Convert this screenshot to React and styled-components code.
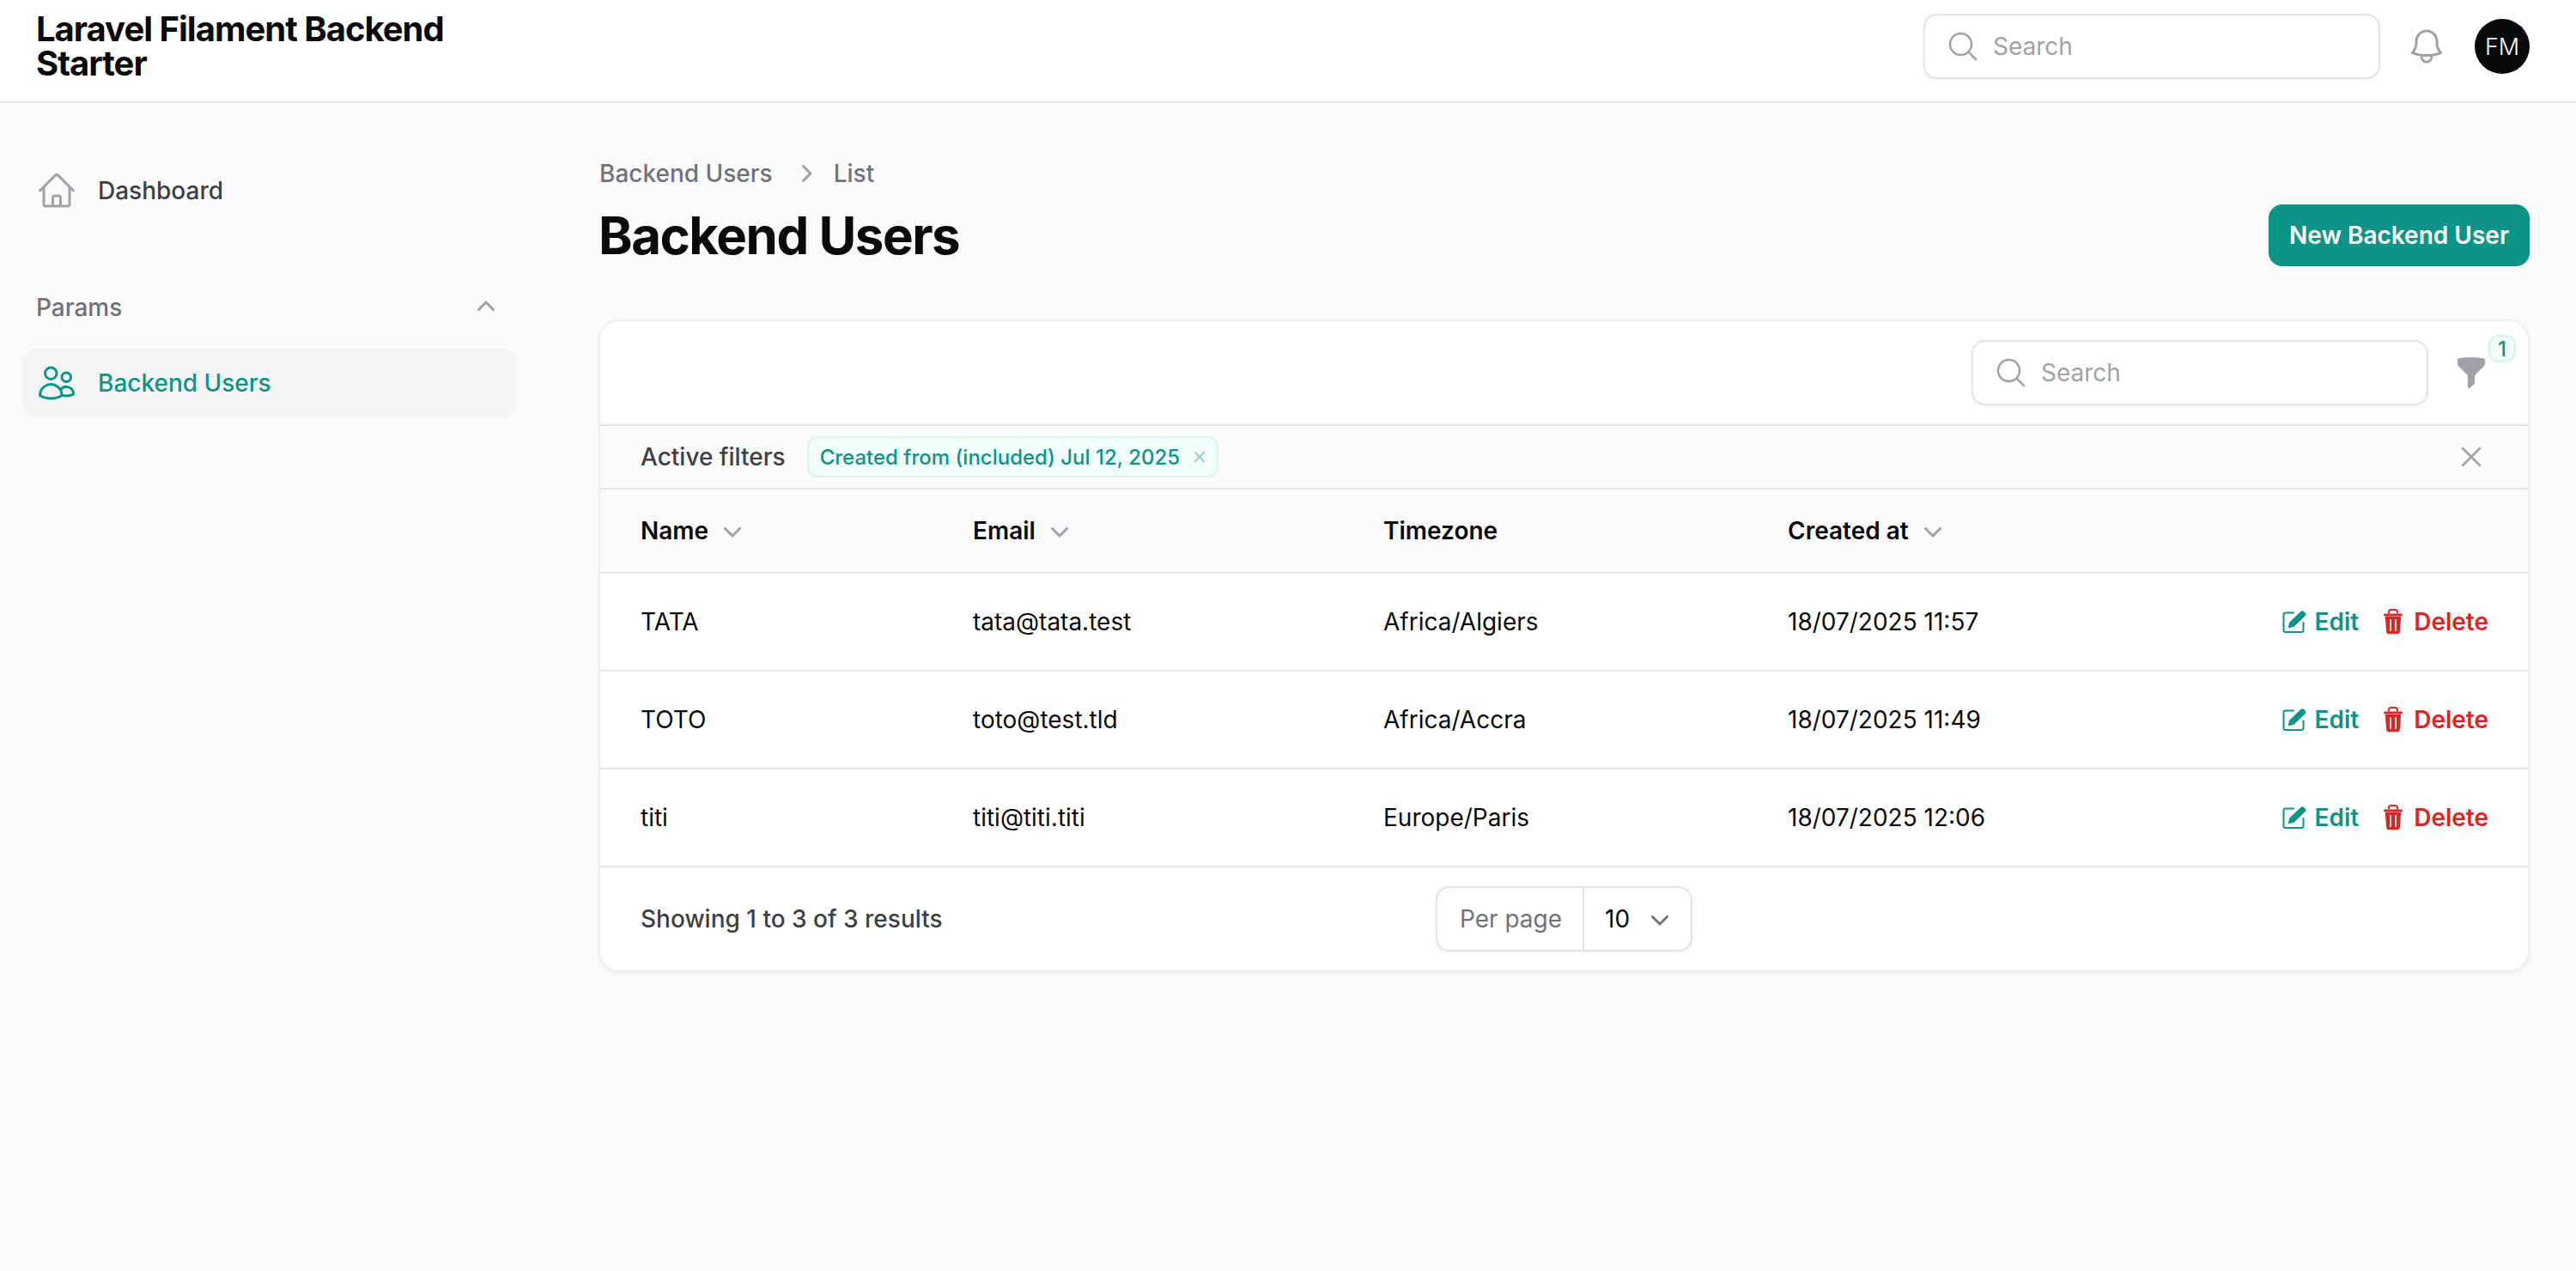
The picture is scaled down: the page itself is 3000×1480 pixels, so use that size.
import React from "react";
import styled, { createGlobalStyle } from "styled-components";
import {
  HiOutlineHome,
  HiOutlineUsers,
  HiOutlineMagnifyingGlass,
  HiOutlineBell,
  HiMiniChevronUp,
  HiMiniChevronDown,
  HiMiniChevronRight,
  HiOutlineXMark,
  HiMiniFunnel,
  HiMiniXMark,
} from "react-icons/hi2";

const Global = createGlobalStyle`
  html, body { margin: 0; padding: 0; background: #fafafa; }
  body { font-family: Inter, "Liberation Sans", sans-serif; color: #0a0a0a; }
  * { box-sizing: border-box; }
`;

const Page = styled.div`
  min-height: 1480px;
  background: #fafafa;
  display: flex;
  flex-direction: column;
`;

const TopBar = styled.header`
  height: 120px;
  background: #fff;
  border-bottom: 2px solid #e6e6e7;
  display: flex;
  align-items: center;
  gap: 32px;
  padding: 0 54px 10px 42px;
`;

const Brand = styled.div`
  font-size: 40px;
  line-height: 40px;
  font-weight: 700;
  letter-spacing: -1px;
  width: 520px;
  color: #0a0a0a;
  margin-right: auto;
`;

const SearchBox = styled.label`
  width: 532px;
  height: 76px;
  margin-right: -2px;
  background: #fff;
  border: 2px solid #e4e4e7;
  border-radius: 16px;
  box-shadow: 0 2px 4px rgba(0, 0, 0, 0.05);
  display: flex;
  align-items: center;
  gap: 15px;
  padding-left: 24px;
  color: #a1a1aa;
  svg { font-size: 40px; flex: none; }
`;

const SearchInput = styled.input`
  border: 0;
  outline: 0;
  background: transparent;
  flex: 1;
  min-width: 0;
  font: 400 28px/40px Inter, sans-serif;
  color: #0a0a0a;
  padding: 0;
  &::placeholder { color: #a1a1aa; opacity: 1; }
`;

const BellWrap = styled.span`
  display: flex;
  color: #a1a1aa;
  font-size: 48px;
`;

const Avatar = styled.span`
  width: 64px;
  height: 64px;
  border-radius: 50%;
  background: #09090b;
  color: #fff;
  font-size: 27px;
  font-weight: 300;
  display: flex;
  align-items: center;
  justify-content: center;
`;

const Body = styled.div`
  flex: 1;
  display: flex;
`;

const Sidebar = styled.aside`
  width: 640px;
  flex: none;
  padding: 62px 38px 0 26px;
  display: flex;
  flex-direction: column;
`;

const NavItem = styled.a`
  height: 80px;
  border-radius: 16px;
  display: flex;
  align-items: center;
  gap: 24px;
  padding: 0 16px;
  font-size: 28px;
  font-weight: 500;
  color: ${(p) => (p.$active ? "#0d9488" : "#3f3f46")};
  background: ${(p) => (p.$active ? "#f4f4f5" : "transparent")};
  svg { font-size: 48px; flex: none; color: ${(p) => (p.$active ? "#0d9488" : "#a1a1aa")}; }
`;

const GroupHead = styled.div`
  margin-top: 76px;
  margin-bottom: 28px;
  height: 40px;
  display: flex;
  align-items: center;
  justify-content: space-between;
  padding: 0 16px;
  font-size: 28px;
  font-weight: 500;
  color: #71717a;
  svg { font-size: 40px; color: #a1a1aa; }
`;

const Main = styled.main`
  flex: 1;
  min-width: 0;
  padding: 62px 54px 0 57px;
`;

const Crumbs = styled.nav`
  display: flex;
  align-items: center;
  gap: 14px;
  height: 40px;
  font-size: 28px;
  font-weight: 500;
  color: #71717a;
  margin-bottom: 16px;
  padding-left: 1px;
  svg { font-size: 40px; color: #a1a1aa; margin: 0 -1px 0 4px; }
`;

const PageHead = styled.div`
  display: flex;
  align-items: center;
  justify-content: space-between;
  height: 72px;
  margin-bottom: 62px;
`;

const Title = styled.h1`
  margin: 0;
  font-size: 60px;
  line-height: 72px;
  font-weight: 700;
  letter-spacing: -1.5px;
  color: #0a0a0a;
`;

const PrimaryButton = styled.button`
  height: 72px;
  padding: 0 24px;
  border: 0;
  border-radius: 16px;
  background: #0d9488;
  color: #fff;
  font: 600 28px/40px Inter, sans-serif;
  box-shadow: 0 2px 4px rgba(0, 0, 0, 0.05);
`;

const Card = styled.section`
  background: #fff;
  border: 2px solid #efeff0;
  border-radius: 24px;
  box-shadow: 0 2px 4px rgba(0, 0, 0, 0.05);
  overflow: hidden;
`;

const Toolbar = styled.div`
  height: 120px;
  display: flex;
  align-items: center;
  justify-content: flex-end;
  gap: 32px;
  padding-right: 46px;
`;

const FilterButton = styled.span`
  position: relative;
  display: flex;
  color: #a1a1aa;
  font-size: 40px;
`;

const CountBadge = styled.span`
  position: absolute;
  left: 40px;
  top: -24px;
  width: 32px;
  height: 32px;
  border-radius: 12px;
  background: #f0fdfa;
  border: 2px solid #d6f2ee;
  color: #0d9488;
  font-size: 24px;
  font-weight: 500;
  display: flex;
  align-items: center;
  justify-content: center;
`;

const FilterBar = styled.div`
  height: 74px;
  border-top: 2px solid #e6e6e7;
  background: #fafafa;
  display: flex;
  align-items: center;
  padding: 0 46px 0 47px;
  font-size: 28px;
  font-weight: 500;
  color: #3f3f46;
`;

const Chip = styled.span`
  margin-left: 25px;
  height: 48px;
  display: flex;
  align-items: center;
  gap: 11px;
  padding: 0 8px 0 13px;
  background: #f0fdfa;
  border: 2px solid #dbf2ee;
  border-radius: 12px;
  color: #0d9488;
  font-size: 24px;
  font-weight: 500;
  svg { font-size: 24px; color: #8ccbc4; }
`;

const ClearFilters = styled.span`
  margin-left: auto;
  display: flex;
  color: #a1a1aa;
  font-size: 40px;
`;

const gridCols = "387px 478px 471px 1fr";

const HeadRow = styled.div`
  display: grid;
  grid-template-columns: ${gridCols};
  height: 98px;
  align-items: center;
  border-top: 2px solid #e6e6e7;
  background: #fafafa;
  padding-left: 47px;
  font-size: 28px;
  font-weight: 600;
  color: #0a0a0a;
`;

const HeadCell = styled.span`
  display: flex;
  align-items: center;
  gap: 8px;
  svg { font-size: 40px; color: #a1a1aa; }
`;

const Row = styled.div`
  display: grid;
  grid-template-columns: ${gridCols};
  height: 114px;
  align-items: center;
  border-top: 2px solid #e6e6e7;
  padding: 0 46px 0 47px;
  font-size: 28px;
  color: #0a0a0a;
`;

const LastCell = styled.div`
  display: flex;
  align-items: center;
  justify-content: space-between;
`;

const Actions = styled.div`
  display: flex;
  gap: 24px;
`;

const ActionLink = styled.a`
  display: flex;
  align-items: center;
  gap: 8px;
  font-size: 28px;
  font-weight: 600;
  color: ${(p) => (p.$danger ? "#dc2626" : "#0d9488")};
`;

const Footer = styled.div`
  height: 122px;
  border-top: 2px solid #e6e6e7;
  display: grid;
  grid-template-columns: 1fr auto 1fr;
  align-items: center;
  padding: 0 47px;
  font-size: 28px;
  font-weight: 500;
  color: #3f3f46;
`;

const PerPage = styled.div`
  height: 76px;
  display: flex;
  align-items: stretch;
  background: #fff;
  border: 2px solid #e4e4e7;
  border-radius: 16px;
  box-shadow: 0 2px 4px rgba(0, 0, 0, 0.05);
  font-weight: 400;
`;

const PerPageLabel = styled.span`
  display: flex;
  align-items: center;
  padding: 0 24px 0 26px;
  color: #71717a;
  border-right: 2px solid #e4e4e7;
`;

const PerPageValue = styled.span`
  display: flex;
  align-items: center;
  gap: 15px;
  padding: 0 16px 0 24px;
  color: #0a0a0a;
  svg { font-size: 40px; color: #6b7280; }
`;

const EditIcon = () => (
  <svg width="32" height="32" viewBox="0 0 32 32" aria-hidden="true">
    <path
      d="M15 5.5H5.5a2 2 0 0 0-2 2V26a2 2 0 0 0 2 2h19a2 2 0 0 0 2-2v-9"
      fill="none"
      stroke="currentColor"
      strokeWidth="2"
      strokeLinecap="round"
    />
    <path
      d="M9.2 22.8l1.6-6.2L23.4 4.6a2.6 2.6 0 0 1 3.8 0l.9.9a2.6 2.6 0 0 1 0 3.8L15.4 21.2z"
      fill="currentColor"
      stroke="currentColor"
      strokeLinejoin="round"
    />
  </svg>
);

const TrashIcon = () => (
  <svg width="32" height="32" viewBox="0 0 32 32" aria-hidden="true">
    <path
      d="M11 6.5V4.5A2.5 2.5 0 0 1 13.5 2h5A2.5 2.5 0 0 1 21 4.5v2"
      fill="none"
      stroke="currentColor"
      strokeWidth="2"
    />
    <rect x="5" y="6.5" width="22" height="3" rx="1.5" fill="currentColor" />
    <path
      d="M6.8 10h18.4l-1.4 18a2.5 2.5 0 0 1-2.5 2.2H10.7A2.5 2.5 0 0 1 8.2 28z"
      fill="currentColor"
    />
    <path d="M13 14v12M19 14v12" stroke="#fff" strokeWidth="2" strokeLinecap="round" />
  </svg>
);

const rows = [
  { name: "TATA", email: "tata@tata.test", zone: "Africa/Algiers", at: "18/07/2025 11:57" },
  { name: "TOTO", email: "toto@test.tld", zone: "Africa/Accra", at: "18/07/2025 11:49" },
  { name: "titi", email: "titi@titi.titi", zone: "Europe/Paris", at: "18/07/2025 12:06" },
];

export default function App() {
  return (
    <Page>
      <Global />
      <TopBar>
        <Brand>Laravel Filament Backend Starter</Brand>
        <SearchBox>
          <HiOutlineMagnifyingGlass />
          <SearchInput placeholder="Search" />
        </SearchBox>
        <BellWrap>
          <HiOutlineBell />
        </BellWrap>
        <Avatar>FM</Avatar>
      </TopBar>
      <Body>
        <Sidebar>
          <NavItem>
            <HiOutlineHome />
            Dashboard
          </NavItem>
          <GroupHead>
            Params
            <HiMiniChevronUp />
          </GroupHead>
          <NavItem $active>
            <HiOutlineUsers />
            Backend Users
          </NavItem>
        </Sidebar>
        <Main>
          <Crumbs>
            <span>Backend Users</span>
            <HiMiniChevronRight />
            <span>List</span>
          </Crumbs>
          <PageHead>
            <Title>Backend Users</Title>
            <PrimaryButton>New Backend User</PrimaryButton>
          </PageHead>
          <Card>
            <Toolbar>
              <SearchBox>
                <HiOutlineMagnifyingGlass />
                <SearchInput placeholder="Search" />
              </SearchBox>
              <FilterButton>
                <HiMiniFunnel />
                <CountBadge>1</CountBadge>
              </FilterButton>
            </Toolbar>
            <FilterBar>
              Active filters
              <Chip>
                Created from (included) Jul 12, 2025
                <HiMiniXMark />
              </Chip>
              <ClearFilters>
                <HiOutlineXMark />
              </ClearFilters>
            </FilterBar>
            <HeadRow>
              <HeadCell>
                Name
                <HiMiniChevronDown />
              </HeadCell>
              <HeadCell>
                Email
                <HiMiniChevronDown />
              </HeadCell>
              <HeadCell>Timezone</HeadCell>
              <HeadCell>
                Created at
                <HiMiniChevronDown />
              </HeadCell>
            </HeadRow>
            {rows.map((r) => (
              <Row key={r.name}>
                <span>{r.name}</span>
                <span>{r.email}</span>
                <span>{r.zone}</span>
                <LastCell>
                  <span>{r.at}</span>
                  <Actions>
                    <ActionLink>
                      <EditIcon />
                      Edit
                    </ActionLink>
                    <ActionLink $danger>
                      <TrashIcon />
                      Delete
                    </ActionLink>
                  </Actions>
                </LastCell>
              </Row>
            ))}
            <Footer>
              <span>Showing 1 to 3 of 3 results</span>
              <PerPage>
                <PerPageLabel>Per page</PerPageLabel>
                <PerPageValue>
                  10
                  <HiMiniChevronDown />
                </PerPageValue>
              </PerPage>
              <span />
            </Footer>
          </Card>
        </Main>
      </Body>
    </Page>
  );
}
